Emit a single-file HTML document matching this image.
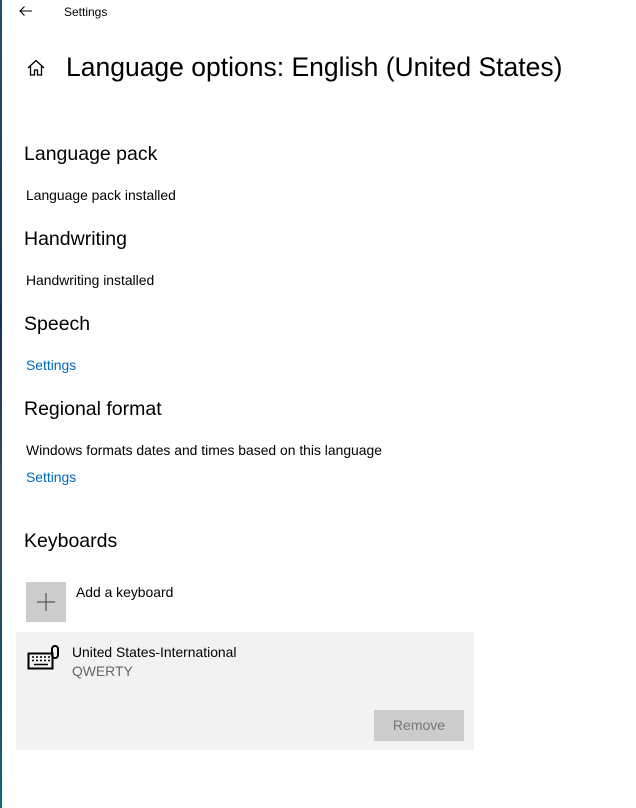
<!DOCTYPE html>
<html><head><meta charset="utf-8"><style>
*{margin:0;padding:0;box-sizing:border-box}
body{width:636px;height:808px;background:#fff;font-family:"Liberation Sans",sans-serif;color:#000;position:relative;overflow:hidden}
.a{position:absolute;white-space:nowrap}
.h{font-size:19.5px}
.t{font-size:13.9px}
.l{font-size:13.9px;color:#0067c0}
</style></head><body>
<div class="a" style="left:0;top:0;width:2px;height:808px;background:linear-gradient(#24506a,#12325e 40%,#3a4a5a 60%,#16506a 85%,#0f6a7a)"></div>
<svg class="a" style="left:18px;top:5px" width="16" height="12" viewBox="0 0 16 12"><path d="M14 6H2M6.5 1.5L2 6l4.5 4.5" stroke="#000" stroke-width="1.1" fill="none"/></svg>
<div class="a" style="left:64px;top:5px;font-size:12px">Settings</div>
<svg class="a" style="left:26px;top:59px" width="20" height="18" viewBox="0 0 20 18"><path d="M2 9L10 1.5 18 9M4.5 7v9h4v-5h3v5h4V7" stroke="#000" stroke-width="1.3" fill="none"/></svg>
<div class="a" style="left:66px;top:52px;font-size:26.5px;font-weight:300">Language options: English (United States)</div>
<div class="a h" style="left:24px;top:143px">Language pack</div>
<div class="a t" style="left:26px;top:187px">Language pack installed</div>
<div class="a h" style="left:24px;top:228px">Handwriting</div>
<div class="a t" style="left:26px;top:272px">Handwriting installed</div>
<div class="a h" style="left:24px;top:313px">Speech</div>
<div class="a l" style="left:26px;top:357px">Settings</div>
<div class="a h" style="left:24px;top:398px">Regional format</div>
<div class="a t" style="left:26px;top:442px">Windows formats dates and times based on this language</div>
<div class="a l" style="left:26px;top:469px">Settings</div>
<div class="a h" style="left:24px;top:530px">Keyboards</div>
<div class="a" style="left:26px;top:582px;width:40px;height:40px;background:#ccc"></div>
<svg class="a" style="left:36px;top:592px" width="20" height="20"><path d="M10 1v18M1 10h18" stroke="#555" stroke-width="1.2"/></svg>
<div class="a t" style="left:76px;top:584px">Add a keyboard</div>
<div class="a" style="left:16px;top:632px;width:458px;height:118px;background:#f2f2f2"></div>
<svg class="a" style="left:26px;top:644px" width="34" height="28" viewBox="0 0 34 28"><rect x="2.5" y="9.5" width="24" height="15" fill="none" stroke="#000" stroke-width="2"/><rect x="26" y="2" width="6" height="12" rx="3" fill="none" stroke="#000" stroke-width="2"/><path d="M6 13h2M10 13h2M14 13h2M18 13h2M22 13h2M6 16.5h2M10 16.5h2M14 16.5h2M18 16.5h2M22 16.5h2M8 20.5h14" stroke="#000" stroke-width="1.5"/></svg>
<div class="a t" style="left:72px;top:644px">United States-International</div>
<div class="a t" style="left:72px;top:663px;color:#666">QWERTY</div>
<div class="a" style="left:374px;top:710px;width:90px;height:31px;background:#ccc;color:#777;font-size:14px;text-align:center;line-height:31px">Remove</div>
</body></html>
